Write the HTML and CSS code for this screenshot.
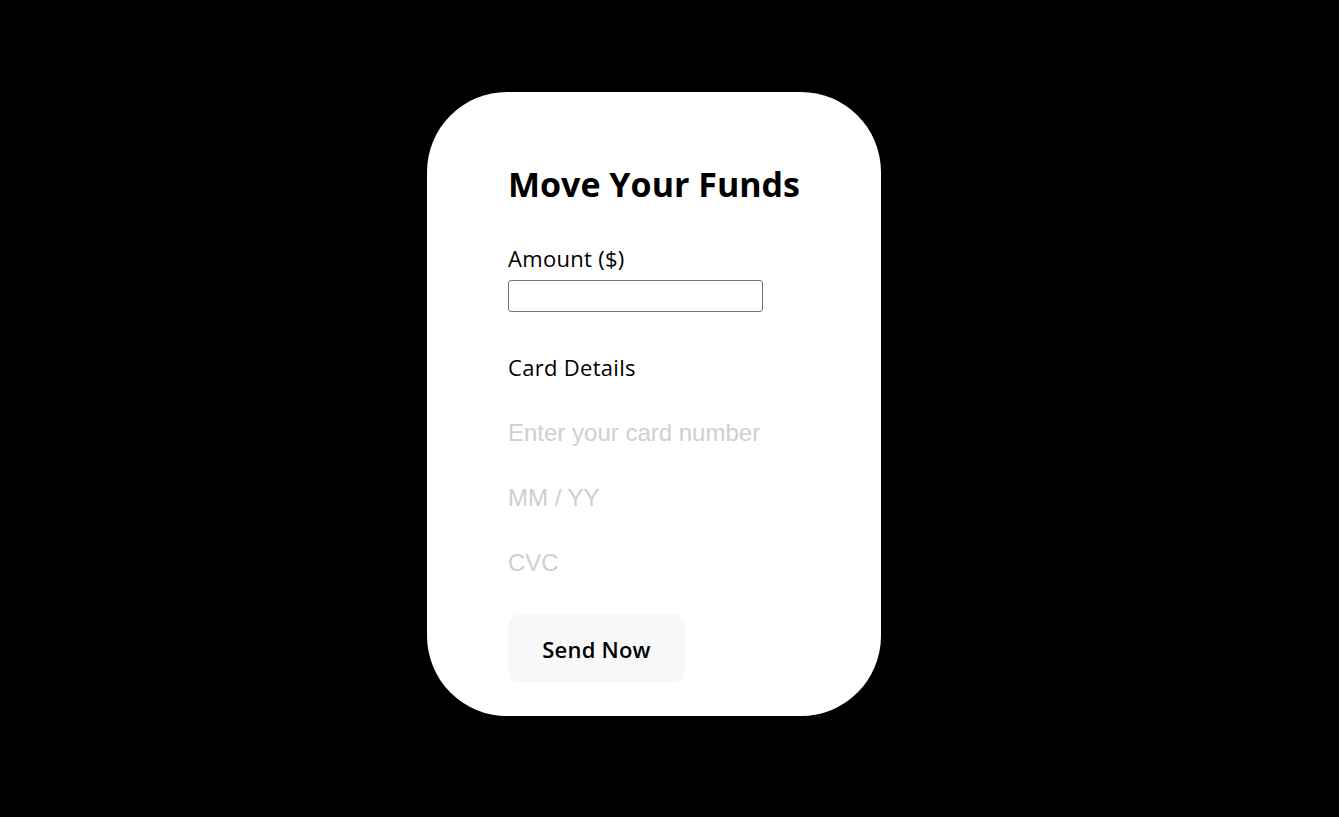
FILE: index.html
```html
<!DOCTYPE html>
<html>
<head>
<meta charset="utf-8">
<link rel="stylesheet" href="styles.css">
</head>
<body>
<div class="page">
  <form class="card">
    <h1 class="title">Move Your Funds</h1>
    <label class="label" for="amount">Amount ($)</label>
    <input class="amount" id="amount" type="text">
    <div class="label card-label">Card Details</div>
    <input class="field" type="text" placeholder="Enter your card number">
    <input class="field" type="text" placeholder="MM / YY">
    <input class="field" type="text" placeholder="CVC">
    <button class="send" type="button">Send Now</button>
  </form>
</div>
</body>
</html>
```

FILE: styles.css
```css
html, body {
  margin: 0;
  padding: 0;
  background: #000;
}
body {
  font-family: "Open Sans", "Noto Sans", sans-serif;
}
.page {
  height: 817px;
  display: flex;
  align-items: flex-start;
  padding-top: 92px;
  padding-left: 427px;
  box-sizing: border-box;
}
.card {
  width: 454px;
  height: 624px;
  box-sizing: border-box;
  background: #fff;
  border-radius: 80px;
  padding: 56px 81px 0;
  display: flex;
  flex-direction: column;
  align-items: flex-start;
}
.card > * {
  flex-shrink: 0;
}
.title {
  margin: 0;
  font-size: 34px;
  font-weight: 700;
  line-height: 72px;
  color: #000;
  white-space: nowrap;
}
.label {
  font-size: 22px;
  color: #000;
  line-height: 30px;
  margin-top: 23px;
  letter-spacing: 0.3px;
}
.amount {
  width: 255px;
  height: 32px;
  box-sizing: border-box;
  border: 1px solid #767676;
  border-radius: 3px;
  margin: 7px 0 0;
  padding: 0 4px;
}
.card-label {
  margin-top: 40px;
}
.field {
  border: none;
  outline: none;
  padding: 0;
  margin-top: 35px;
  height: 30px;
  width: 300px;
  font-family: "Liberation Sans", Arial, sans-serif;
  font-size: 24px;
  background: transparent;
}
.card-label + .field {
  margin-top: 36px;
}
.field::placeholder {
  color: #cfcfcf;
}
.send {
  margin-top: 36px;
  width: 177px;
  height: 69px;
  border: none;
  border-radius: 12px;
  background: #f8f8f8;
  font-family: "Open Sans", "Noto Sans", sans-serif;
  font-size: 22px;
  font-weight: 600;
  color: #000;
  letter-spacing: 0.2px;
}
```
